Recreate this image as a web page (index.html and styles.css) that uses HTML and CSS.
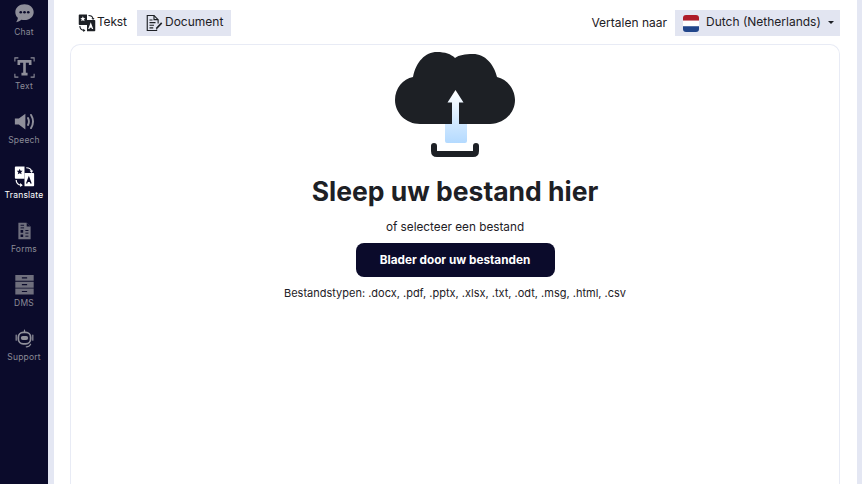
FILE: index.html
```html
<!DOCTYPE html>
<html lang="en">
<head>
  <meta charset="UTF-8" />
  <meta name="viewport" content="width=device-width, initial-scale=1" />
  <title>Translate</title>
  <link rel="stylesheet" href="styles.css">
</head>
<body>
  <nav class="sidebar">
    <a class="side-item">
      <svg class="side-icon" viewBox="0 0 24 24"><path d="M12 1.500c6 0 10.500 3.900 10.500 9s-4.500 9-10.500 9c-1.300 0-2.500-.2-3.600-.5-1.500 1.300-3.400 2.400-5.900 2.900 1.100-1.600 1.800-3.100 1.900-5C2.500 15.300 1.500 13 1.500 10.500c0-5.100 4.500-9 10.500-9z" fill="#8f8f9a"/><circle cx="7.700" cy="10.500" r="1.500" fill="#0b0b2b"/><circle cx="12" cy="10.500" r="1.500" fill="#0b0b2b"/><circle cx="16.300" cy="10.500" r="1.500" fill="#0b0b2b"/></svg>
      <span>Chat</span>
    </a>
    <a class="side-item">
      <svg class="side-icon" viewBox="0 0 24 24" fill="none" stroke="#8f8f9a" stroke-width="1.200"><path d="M1 5V1h4M19 1h4v4M1 19v4h4M19 23h4v-4"/><path d="M5.500 9V5h13v4M12 5v14.500M8.500 19.500h7" stroke-width="3"/></svg>
      <span>Text</span>
    </a>
    <a class="side-item">
      <svg class="side-icon" viewBox="0 0 24 24"><path d="M1 8.500h4.500L13 3v18l-7.500-5.500H1z" fill="#8f8f9a"/><path d="M16 8c1.300 2.500 1.300 5.500 0 8M19.500 4.500c2.700 4.500 2.700 10.500 0 15" fill="none" stroke="#8f8f9a" stroke-width="2.200" stroke-linecap="round"/></svg>
      <span>Speech</span>
    </a>
    <a class="side-item active">
      <svg class="side-icon" viewBox="0 0 24 24"><use href="#translate-icon"/></svg>
      <span>Translate</span>
    </a>
    <a class="side-item">
      <svg class="side-icon" viewBox="0 0 24 24"><path d="M5 3h9.500L19 7.500V22H5z" fill="#6f6f7d"/><path d="M14.500 3v4.500H19" fill="#0b0b2b"/><path d="M7.500 6h4M7.500 9h4M13 12h3.500M13 15h3.500M13 18.500h3.500" stroke="#0b0b2b" stroke-width="1.100"/><path d="M7.500 11.500h3v3h-3zM7.500 16.500h3v3h-3z" fill="#0b0b2b"/></svg>
      <span>Forms</span>
    </a>
    <a class="side-item">
      <svg class="side-icon" viewBox="0 0 24 24"><path d="M1.500 1h21v6.800h-21zM1.500 8.800h21v6.800h-21zM1.500 16.600h21v6.800h-21z" fill="#6f6f7d"/><path d="M9 4.500h6M9 12.200h6M9 20h6" stroke="#0b0b2b" stroke-width="1.400"/></svg>
      <span>DMS</span>
    </a>
    <a class="side-item">
      <svg class="side-icon" viewBox="0 0 24 24" fill="none" stroke="#8f8f9a"><rect x="5" y="5" width="14" height="13" rx="5.500" stroke-width="2"/><rect x="7.800" y="9" width="8.400" height="4.600" rx="2.300" fill="#8f8f9a" stroke="none"/><path d="M12 2.500v2M2.500 8v6M21.500 8v6" stroke-width="1.400" stroke-linecap="round"/><path d="M19 18.500c-1 2-2.500 3-5 3" stroke-width="1.300" stroke-linecap="round"/></svg>
      <span>Support</span>
    </a>
  </nav>

  <main class="content">
    <header class="toolbar">
      <div class="tabs">
        <button class="tab first">
          <svg class="tab-icon" viewBox="0 0 24 24"><use href="#translate-icon-dark"/></svg>
          Tekst
        </button>
        <button class="tab selected">
          <svg class="tab-icon" viewBox="0 0 24 24" fill="none" stroke="#1d2025" stroke-width="1.500"><path d="M15.500 20.500V22H3V2h9l5.500 5.500v5"/><path d="M12 2v5.500h5.500M6 8h4M6 11.500h8M6 15h6M6 18.500h5"/><path d="M15 18l6.500-7 1.500 1.500L16.500 19.500 14.500 20z" fill="#1d2025" stroke="none"/></svg>
          Document
        </button>
      </div>
      <div class="lang">
        <span class="lang-label">Vertalen naar</span>
        <button class="lang-select">
          <svg class="flag" viewBox="0 0 16 17"><path d="M0 5.700V3a3 3 0 0 1 3-3h10a3 3 0 0 1 3 3v2.700z" fill="#ae1c28"/><path d="M0 5.700h16v5.600H0z" fill="#fff"/><path d="M0 11.300h16V14a3 3 0 0 1-3 3H3a3 3 0 0 1-3-3z" fill="#21468b"/></svg>
          <span>Dutch (Netherlands)</span>
          <i class="caret"></i>
        </button>
      </div>
    </header>

    <section class="drop-card">
      <svg class="cloud" viewBox="0 0 120 106">
        <defs>
          <linearGradient id="arrowFill" x1="0" y1="0" x2="0" y2="1">
            <stop offset="0" stop-color="#ffffff"/>
            <stop offset="1" stop-color="#b4daff"/>
          </linearGradient>
        </defs>
        <path d="M25 72C11 72 0 61 0 48C0 36 8 27 18 25C21 10 30 0 42 0C50 0 56 2 60 6C64 3 70 2 78 2C90 2 99 12 102 25C112 27 120 37 120 48C120 61 109 72 95 72Z" fill="#1d2025"/>
        <path d="M60.500 38l8 12.500h-4.500V72h8v17a2 2 0 0 1-2 2H52a2 2 0 0 1-2-2V72h7V50.500h-4.500z" fill="url(#arrowFill)"/>
        <path d="M39 94V99Q39 102 42 102H78Q81 102 81 99V94" fill="none" stroke="#1d2025" stroke-width="6" stroke-linecap="round"/>
      </svg>
      <h1>Sleep uw bestand hier</h1>
      <p class="sub">of selecteer een bestand</p>
      <button class="browse">Blader door uw bestanden</button>
      <p class="types">Bestandstypen: .docx, .pdf, .pptx, .xlsx, .txt, .odt, .msg, .html, .csv</p>
    </section>
  </main>

  <svg class="defs" aria-hidden="true">
    <symbol id="translate-icon" viewBox="0 0 24 24">
      <path d="M1 1.500a1 1 0 0 1 1-1h10v14H2a1 1 0 0 1-1-1z" fill="#fff"/>
      <path d="M12 8h10a1 1 0 0 1 1 1v13a1 1 0 0 1-1 1H12z" fill="#fff"/>
      <path d="M6.500 3l1 2.300 2.400.2-1.800 1.600.6 2.400-2.200-1.300-2.200 1.300.6-2.400L3.100 5.500l2.400-.2z" fill="#0b0b2b"/>
      <path d="M17 11l3.300 9h-1.800l-.5-1.600h-2.200l-.5 1.600h-1.700z" fill="#0b0b2b"/>
      <path d="M14 2c3.500 0 5.500 1.500 6 4" fill="none" stroke="#fff" stroke-width="1.400"/>
      <path d="M17.800 5.500l2.400 2.500 1.800-2.800z" fill="#fff"/>
      <path d="M2.500 16c0 3.500 2 5.500 6 6" fill="none" stroke="#fff" stroke-width="1.400"/>
      <path d="M7 19.500l3 2.500-3 2z" fill="#fff"/>
    </symbol>
    <symbol id="translate-icon-dark" viewBox="0 0 24 24">
      <path d="M1 1.500a1 1 0 0 1 1-1h10v14H2a1 1 0 0 1-1-1z" fill="#1d2025"/>
      <path d="M12 8h10a1 1 0 0 1 1 1v13a1 1 0 0 1-1 1H12z" fill="#1d2025"/>
      <path d="M6.500 3l1 2.300 2.400.2-1.800 1.600.6 2.400-2.200-1.300-2.200 1.300.6-2.400L3.100 5.500l2.400-.2z" fill="#fff"/>
      <path d="M17 11l3.300 9h-1.800l-.5-1.600h-2.200l-.5 1.600h-1.700z" fill="#fff"/>
      <path d="M14 2c3.500 0 5.500 1.500 6 4" fill="none" stroke="#1d2025" stroke-width="1.400"/>
      <path d="M17.800 5.500l2.400 2.500 1.800-2.800z" fill="#1d2025"/>
      <path d="M2.500 16c0 3.500 2 5.500 6 6" fill="none" stroke="#1d2025" stroke-width="1.400"/>
      <path d="M7 19.500l3 2.500-3 2z" fill="#1d2025"/>
    </symbol>
  </svg>
</body>
</html>
```

FILE: styles.css
```css
* {
  box-sizing: border-box;
}

html, body {
  height: 100%;
}

body {
  margin: 0;
  display: flex;
  overflow: hidden;
  background-color: #fff;
  color: #1d2025;
  font-family: 'Inter', 'Liberation Sans', sans-serif;
}

.defs {
  display: none;
}

.sidebar {
  width: 54px;
  flex: none;
  display: flex;
  flex-direction: column;
  align-items: flex-start;
  padding-top: 3px;
  gap: 20.2px;
  background-color: #0b0b2b;
  border-right: 6px solid #e4e7f3;
}

.side-item {
  display: flex;
  flex-direction: column;
  align-items: center;
  gap: 3px;
  width: 48px;
  height: 34px;
  font-size: 8.500px;
  line-height: 10px;
  letter-spacing: 0.2px;
  color: #8a8a96;
}

.side-item.active {
  color: #fff;
}

.side-icon {
  width: 21px;
  height: 21px;
  flex: none;
}

.content {
  flex: 1;
  min-width: 0;
  display: flex;
  flex-direction: column;
  padding: 10px 17px 0 16px;
  border-right: 5px solid #e4e7f3;
}

.toolbar {
  display: flex;
  justify-content: space-between;
  align-items: center;
  height: 26px;
  margin-bottom: 8px;
}

.tabs, .lang {
  display: flex;
  align-items: center;
}

.tab, .lang-select {
  display: flex;
  align-items: center;
  height: 26px;
  border: none;
  background: none;
  color: #1d2025;
  font-family: inherit;
  font-size: 12px;
  white-space: nowrap;
  padding: 0 0 3px 8px;
  gap: 2px;
}

.tab.first {
  width: 67px;
  gap: 1px;
  letter-spacing: -0.2px;
}

.tab.selected {
  width: 94px;
}

.tab.selected, .lang-select {
  background-color: #e2e5f1;
}

.tab-icon {
  width: 18px;
  height: 18px;
  flex: none;
  margin-top: 3px;
}

.lang-label {
  font-size: 12px;
  margin-right: 8px;
  padding-bottom: 2px;
}

.lang-select {
  gap: 7px;
  padding-right: 8px;
  width: 165px;
}

.flag {
  width: 16px;
  height: 17px;
  flex: none;
  margin-top: 3px;
}

.caret {
  border-top: 3px solid #1d2025;
  border-left: 3px solid transparent;
  border-right: 3px solid transparent;
  margin-top: 2px;
}

.drop-card {
  flex: 1;
  display: flex;
  flex-direction: column;
  align-items: center;
  padding-top: 7px;
  border: 1px solid #e8ebf5;
  border-bottom: none;
  border-radius: 10px 10px 0 0;
}

.cloud {
  width: 120px;
  height: 106px;
  flex: none;
}

h1 {
  margin: 17px 0 0;
  font-size: 26.500px;
  line-height: 32px;
  font-weight: 700;
}

.sub {
  margin: 12px 0 0;
  font-size: 11.750px;
  line-height: 16px;
}

.browse {
  margin-top: 8px;
  width: 199px;
  height: 34px;
  border: none;
  border-radius: 8px;
  background-color: #0b0b2b;
  color: #fff;
  font-family: inherit;
  font-size: 11.750px;
  font-weight: 700;
}

.types {
  margin: 8px 0 0;
  font-size: 11px;
  line-height: 16px;
}
```
